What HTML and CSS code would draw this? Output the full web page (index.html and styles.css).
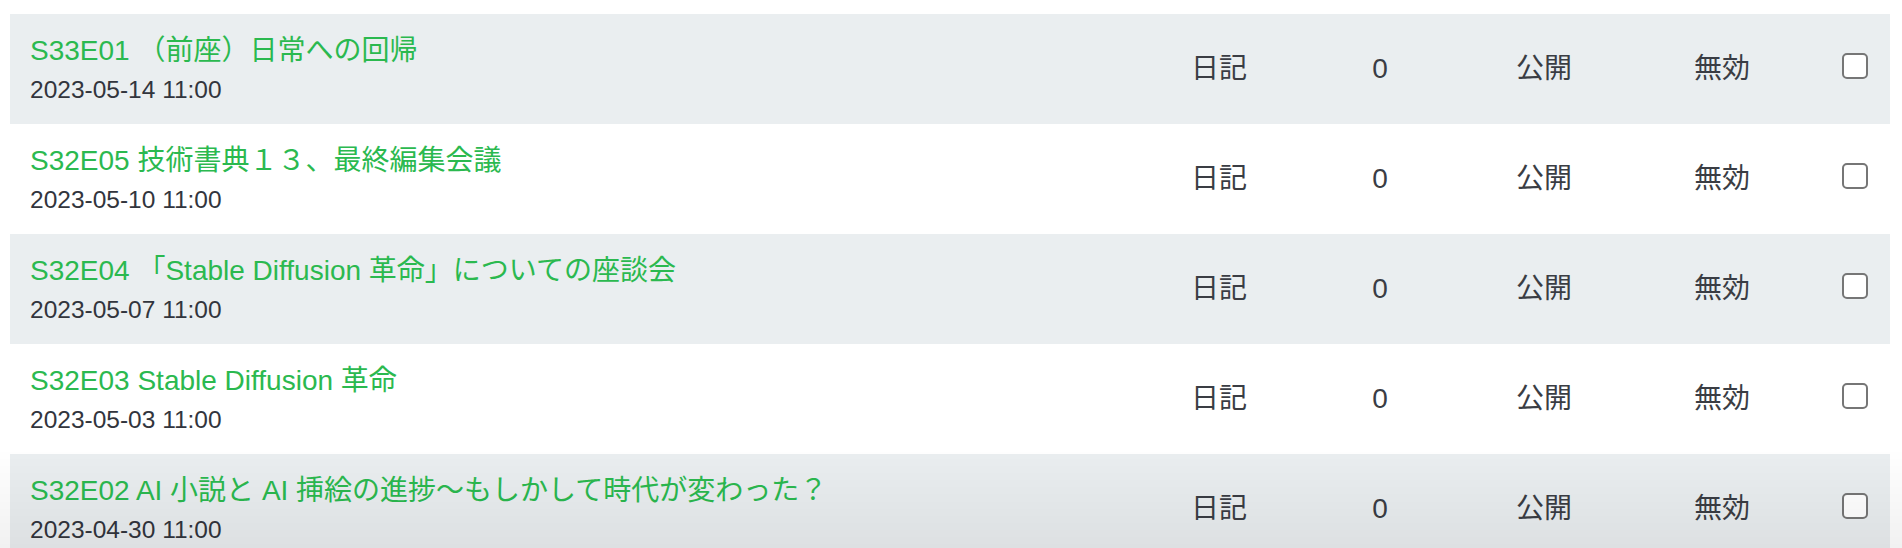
FILE: index.html
```html
<!DOCTYPE html>
<html lang="ja">
<head>
<meta charset="utf-8">
<title>Episodes</title>
<link rel="stylesheet" href="styles.css">
</head>
<body>
<div class="list">
  <div class="row alt">
    <div class="main">
      <a class="title" href="#">S33E01 （前座）日常への回帰</a>
      <div class="date">2023-05-14 11:00</div>
    </div>
    <div class="cell c-cat">日記</div>
    <div class="cell c-num">0</div>
    <div class="cell c-pub">公開</div>
    <div class="cell c-flag">無効</div>
    <div class="cell c-check"><span class="box"></span></div>
  </div>
  <div class="row">
    <div class="main">
      <a class="title" href="#">S32E05 技術書典１３、最終編集会議</a>
      <div class="date">2023-05-10 11:00</div>
    </div>
    <div class="cell c-cat">日記</div>
    <div class="cell c-num">0</div>
    <div class="cell c-pub">公開</div>
    <div class="cell c-flag">無効</div>
    <div class="cell c-check"><span class="box"></span></div>
  </div>
  <div class="row alt">
    <div class="main">
      <a class="title" href="#">S32E04 「Stable Diffusion 革命」についての座談会</a>
      <div class="date">2023-05-07 11:00</div>
    </div>
    <div class="cell c-cat">日記</div>
    <div class="cell c-num">0</div>
    <div class="cell c-pub">公開</div>
    <div class="cell c-flag">無効</div>
    <div class="cell c-check"><span class="box"></span></div>
  </div>
  <div class="row">
    <div class="main">
      <a class="title" href="#">S32E03 Stable Diffusion 革命</a>
      <div class="date">2023-05-03 11:00</div>
    </div>
    <div class="cell c-cat">日記</div>
    <div class="cell c-num">0</div>
    <div class="cell c-pub">公開</div>
    <div class="cell c-flag">無効</div>
    <div class="cell c-check"><span class="box"></span></div>
  </div>
  <div class="row alt">
    <div class="main">
      <a class="title" href="#">S32E02 AI 小説と AI 挿絵の進捗〜もしかして時代が変わった？</a>
      <div class="date">2023-04-30 11:00</div>
    </div>
    <div class="cell c-cat">日記</div>
    <div class="cell c-num">0</div>
    <div class="cell c-pub">公開</div>
    <div class="cell c-flag">無効</div>
    <div class="cell c-check"><span class="box"></span></div>
  </div>
</div>
<div class="fade"></div>
</body>
</html>
```

FILE: styles.css
```css
html, body {
  margin: 0;
  padding: 0;
  background: #ffffff;
}

body {
  font-family: "Liberation Sans", "Noto Sans CJK JP", sans-serif;
  color: #3a3d44;
  overflow: hidden;
}

.list {
  padding: 14px 12px 0 10px;
}

.row {
  display: grid;
  grid-template-columns: 1130px 158px 164px 164px 192px 72px;
  align-items: center;
  height: 110px;
  background: #ffffff;
}

.row.alt {
  background: #eaeef0;
}

.main {
  padding: 17px 0 17px 20px;
  display: flex;
  flex-direction: column;
}

.title {
  font-size: 28px;
  line-height: 40px;
  color: #2bb94f;
  text-decoration: none;
  white-space: nowrap;
}

.date {
  margin-top: 2px;
  font-size: 24.5px;
  line-height: 34px;
  color: #32353d;
}

.cell {
  font-size: 28px;
  line-height: 34px;
  text-align: center;
  color: #3a3d44;
}

.c-check {
  display: flex;
  justify-content: center;
}

.box {
  display: block;
  width: 26px;
  height: 26px;
  box-sizing: border-box;
  border: 2px solid #767676;
  border-radius: 5px;
  background: #ffffff;
  margin: 0 0 6px 2px;
}

.fade {
  position: fixed;
  left: 0;
  right: 0;
  bottom: 0;
  height: 100px;
  pointer-events: none;
  background: linear-gradient(to bottom, rgba(0, 0, 0, 0) 0%, rgba(0, 0, 0, 0.055) 100%);
}
```
